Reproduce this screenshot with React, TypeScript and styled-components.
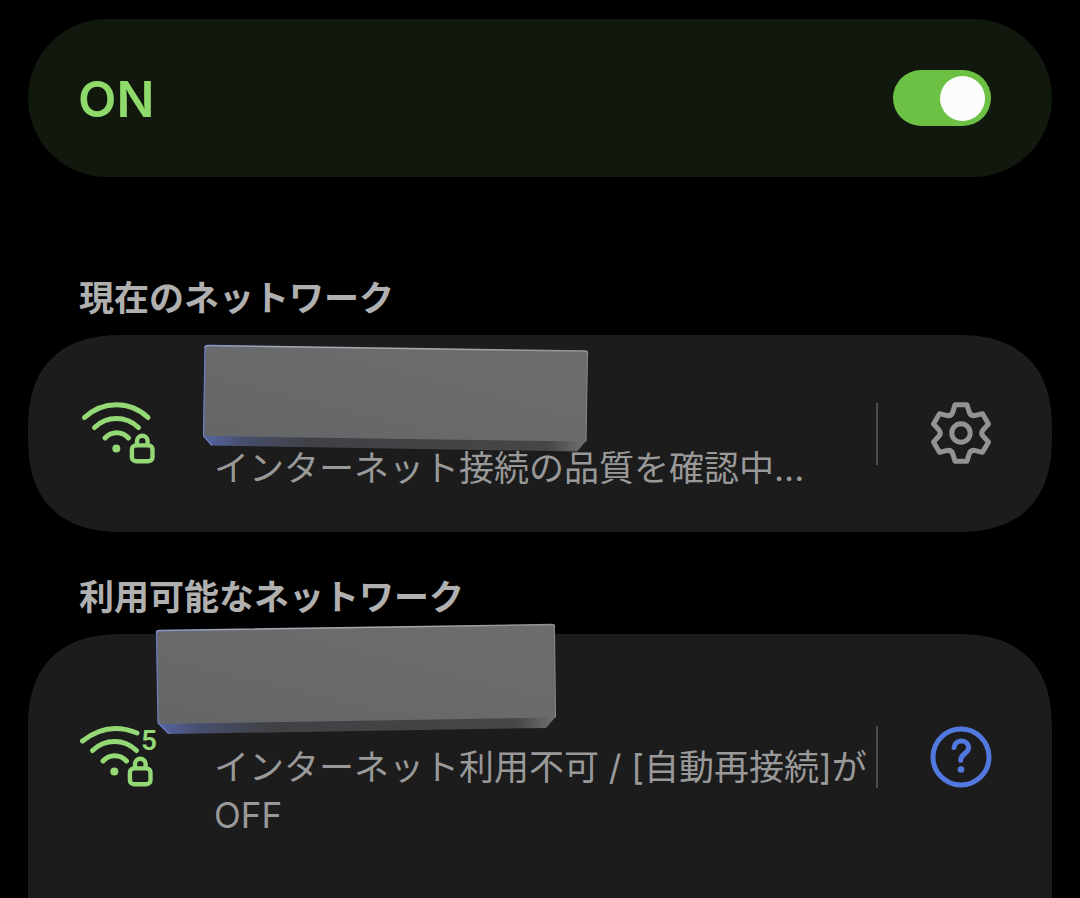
import React from "react";
import styled, { createGlobalStyle } from "styled-components";

const GlobalStyle = createGlobalStyle`
  *, *::before, *::after { box-sizing: border-box; }
  html { background: #000; }
  body {
    margin: 0;
    color: #999;
    font-family: Inter, "Noto Sans CJK JP", sans-serif;
  }
`;

const Page = styled.main`
  display: flex;
  flex-direction: column;
  min-height: 100vh;
  padding: 19px 28px 0;
`;

const MasterSwitch = styled.label`
  display: flex;
  align-items: center;
  justify-content: space-between;
  min-height: 158px;
  margin-bottom: 56px;
  padding: 0 61px 0 50px;
  border-radius: 79px;
  background: #11180d;
`;

const SwitchLabel = styled.span`
  padding-top: 2px;
  color: #8edb6b;
  font-size: 50px;
  font-weight: 600;
  line-height: 60px;
`;

const Toggle = styled.input`
  appearance: none;
  display: flex;
  align-items: center;
  width: 98px;
  height: 56px;
  margin: 0;
  padding: 0 6px;
  border-radius: 28px;
  background: #4a4a4a;

  &::before {
    content: "";
    width: 45px;
    height: 45px;
    border-radius: 50%;
    background: #fcfcfc;
  }

  &:checked {
    justify-content: flex-end;
    background: #6cc144;
  }
`;

const Section = styled.section<{ $fill?: boolean }>`
  display: flex;
  flex-direction: column;
  flex-grow: ${(p) => (p.$fill ? 1 : 0)};
`;

const SectionTitle = styled.h2`
  margin: 40px 51px 12px;
  color: #b0b0b0;
  font-size: 35px;
  font-weight: 700;
  line-height: 50px;
`;

const Card = styled.div<{ $open?: boolean }>`
  flex-grow: 1;
  border-radius: ${(p) => (p.$open ? "76px 76px 0 0" : "76px")};
  background: #1c1c1c;

  @supports (corner-shape: superellipse(1.3)) {
    border-radius: ${(p) => (p.$open ? "96px 96px 0 0" : "96px")};
    corner-shape: superellipse(1.3);
  }
`;

const NetworkRow = styled.div`
  display: flex;
  align-items: center;
  padding: 40px 60px 40px 52px;
`;

const SignalIcon = styled.svg`
  flex: none;
  width: 80px;
  height: 66px;
  margin-right: 54px;
  fill: none;
  stroke: #95d876;
  stroke-linecap: round;
`;

const NetworkText = styled.div`
  position: relative;
  flex: 1;
  min-width: 0;
`;

const NetworkName = styled.div`
  height: 69px;
`;

const Cover = styled.svg<{ $left: number; $top: number }>`
  position: absolute;
  left: ${(p) => p.$left}px;
  top: ${(p) => p.$top}px;
  width: 404px;
  height: 114px;
`;

const Status = styled.p`
  margin: 0;
  font-size: 35px;
  font-weight: 400;
  line-height: 48px;
`;

const Divider = styled.span`
  flex: none;
  width: 2px;
  height: 62px;
  margin-right: 52px;
  background: #4c4c4e;
`;

const IconButton = styled.button<{ $color: string }>`
  flex: none;
  width: 62px;
  height: 66px;
  padding: 0;
  border: 0;
  background: none;
  color: ${(p) => p.$color};

  svg {
    display: block;
    width: 62px;
    height: 66px;
    fill: none;
    stroke: currentColor;
    stroke-width: 5;
    stroke-linecap: round;
    stroke-linejoin: round;
  }
`;

function Wifi({ band }: { band?: string }) {
  return (
    <SignalIcon viewBox={band ? "22 21 80 66" : "20 21 80 66"} aria-hidden="true">
      <g strokeWidth={5}>
        <path d={band ? "M24.5 38 Q50 18 79 30" : "M24.5 37.5 C43 20.5 70 20.5 88 37.5"} />
        <path d="M34.5 47.5 C47 35.5 66 35.5 78.5 47.5" />
        <path d="M45 58 C51.5 51 62 51 68.5 58" />
      </g>
      <circle cx={56.3} cy={68.5} r={4} fill="#95d876" stroke="none" />
      <g strokeWidth={4.4}>
        <rect x={71.9} y={65.4} width={20.6} height={15.8} rx={4} />
        <path d="M77 65 V61 A5.3 5.3 0 0 1 87.6 61 V65" />
      </g>
      {band && (
        <text
          x={83}
          y={47}
          fontFamily="Roboto, sans-serif"
          fontSize={28}
          fontWeight={600}
          fill="#95d876"
          stroke="none"
        >
          {band}
        </text>
      )}
    </SignalIcon>
  );
}

const gearPath = (() => {
  const turn = (x: number, y: number, step: number) => {
    const a = (step * Math.PI) / 3;
    const px = x * Math.cos(a) - y * Math.sin(a);
    const py = x * Math.sin(a) + y * Math.cos(a);
    return `${px.toFixed(2)} ${py.toFixed(2)}`;
  };
  let d = "";
  for (let i = 0; i < 6; i++) {
    d += `${i ? "L" : "M"}${turn(-6, -28.3, i)} L${turn(6, -28.3, i)} L${turn(8, -21.5, i)} `;
    d += `C${turn(8.9, -18.2, i)} ${turn(-8.9, -18.2, i + 1)} ${turn(-8, -21.5, i + 1)} `;
  }
  return d + "Z";
})();

function Gear() {
  return (
    <svg viewBox="-31 -32 62 66" aria-hidden="true">
      <path d={gearPath} />
      <circle r={9.2} />
    </svg>
  );
}

function Help() {
  return (
    <svg viewBox="-31 -33 62 66" aria-hidden="true">
      <circle r={28} />
      <path d="M-7 -9.5 C-6 -18.5 7.6 -18 7.6 -9.2 C7.6 -3.5 -.3 -3.5 -.3 3.2" />
      <circle cy={12.5} r={3.3} fill="currentColor" stroke="none" />
    </svg>
  );
}

type SlabProps = {
  id: string;
  left: number;
  top: number;
  face: string;
  base: string;
  rim: string;
  side: string;
  edge: string;
};

function Slab({ id, left, top, face, base, rim, side, edge }: SlabProps) {
  return (
    <Cover $left={left} $top={top} viewBox="0 0 404 114" aria-hidden="true">
      <defs>
        <linearGradient id={`${id}-face`} x1="0" y1="1" x2="1" y2="0">
          <stop offset="0" stopColor="#646566" />
          <stop offset="0.5" stopColor="#696a6b" />
          <stop offset="1" stopColor="#6d6d6e" />
        </linearGradient>
        <linearGradient id={`${id}-base`}>
          <stop offset="0" stopColor="#5666a4" />
          <stop offset="0.1" stopColor="#474e6e" />
          <stop offset="0.28" stopColor="#404145" />
          <stop offset="0.9" stopColor="#464646" />
          <stop offset="1" stopColor="#707070" />
        </linearGradient>
        <linearGradient id={`${id}-rim`} gradientUnits="userSpaceOnUse" x1="0" y1="0" x2="404" y2="0">
          <stop offset="0" stopColor="#8794d0" />
          <stop offset="0.2" stopColor="#a4a8b8" />
          <stop offset="0.6" stopColor="#a8a8a8" />
          <stop offset="1" stopColor="#909090" />
        </linearGradient>
      </defs>
      <path d={base} fill={`url(#${id}-base)`} />
      <path d={face} fill={`url(#${id}-face)`} />
      <path d={rim} fill="none" stroke={`url(#${id}-rim)`} strokeWidth={1.5} strokeLinejoin="round" />
      <path d={side} fill="none" stroke="#6e7fc4" strokeWidth={1.2} />
      <path d={edge} fill="none" stroke="#8b8b8b" strokeWidth={1} />
    </Cover>
  );
}

export default function App() {
  return (
    <>
      <GlobalStyle />
      <Page>
        <MasterSwitch>
          <SwitchLabel>ON</SwitchLabel>
          <Toggle type="checkbox" role="switch" defaultChecked />
        </MasterSwitch>

        <Section>
          <SectionTitle>現在のネットワーク</SectionTitle>
          <Card>
            <NetworkRow>
              <Wifi />
              <NetworkText>
                <NetworkName>
                  <Slab
                    id="current"
                    left={-14}
                    top={-35}
                    face="M5 8 Q5 5.5 8 5.5 L385 11 Q387.5 11 387.5 13 L386 101.5 L3 96 Z"
                    base="M3 95 L12 105.5 L377 111.5 L386 101 Z"
                    rim="M5 8 Q5 5.5 8 5.5 L385 11 Q387.5 11 387.5 13"
                    side="M5 8 L3.5 96 L12 105.5"
                    edge="M387.5 13 L386 101.5"
                  />
                </NetworkName>
                <Status>インターネット接続の品質を確認中...</Status>
              </NetworkText>
              <Divider />
              <IconButton type="button" aria-label="ネットワーク設定" $color="#939393">
                <Gear />
              </IconButton>
            </NetworkRow>
          </Card>
        </Section>

        <Section $fill>
          <SectionTitle>利用可能なネットワーク</SectionTitle>
          <Card $open>
            <NetworkRow>
              <Wifi band="5" />
              <NetworkText>
                <NetworkName>
                  <Slab
                    id="available"
                    left={-59}
                    top={-54}
                    face="M1.5 13 Q1.5 10.5 4 10.5 L397 4.5 Q399.5 4.5 399.5 7 L400.5 97.5 L3 104 Z"
                    base="M3 103 L14 114 L391 108 L400.5 97 Z"
                    rim="M1.5 13 Q1.5 10.5 4 10.5 L397 4.5 Q399.5 4.5 399.5 7"
                    side="M1.5 13 L3 103 L14 114"
                    edge="M399.5 7 L400.5 97.5"
                  />
                </NetworkName>
                <Status>インターネット利用不可 / [自動再接続]がOFF</Status>
              </NetworkText>
              <Divider />
              <IconButton type="button" aria-label="ヘルプ" $color="#5279e0">
                <Help />
              </IconButton>
            </NetworkRow>
          </Card>
        </Section>
      </Page>
    </>
  );
}
